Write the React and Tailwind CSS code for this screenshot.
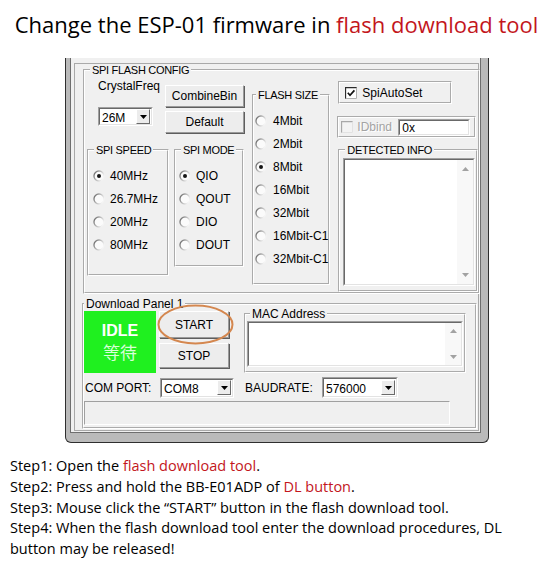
import React from "react";

const red = "text-[#c3161c]";

function RadioMark({ on }) {
  return (
    <svg width="12" height="12" viewBox="0 0 12 12" className="shrink-0">
      <defs>
        <linearGradient id="rg" x1="0" y1="0" x2="1" y2="0.5">
          <stop offset="0" stopColor="#5c5c5c" />
          <stop offset="0.5" stopColor="#b5b5b5" />
          <stop offset="1" stopColor="#f4f4f4" />
        </linearGradient>
      </defs>
      <circle cx="6" cy="6" r="5" fill="#fbfbfb" stroke="url(#rg)" strokeWidth="1.3" />
      {on && <circle cx="6" cy="6" r="2" fill="#151515" />}
    </svg>
  );
}

function Radio({ on, label, gap = "ml-[5px]" }) {
  return (
    <div className="flex h-[23px] items-center whitespace-nowrap">
      <RadioMark on={on} />
      <span className={gap}>{label}</span>
    </div>
  );
}

function CheckMark({ on, disabled }) {
  return (
    <svg width="12" height="12" viewBox="0 0 12 12" className="shrink-0">
      <rect x="0" y="0" width="12" height="12" fill={disabled ? "#f3f3f3" : "#fff"} />
      <path d="M0.5 12V0.5H12" stroke={disabled ? "#a8a8a8" : "#2a2a2a"} strokeWidth="1.3" fill="none" />
      <path d="M11.5 0.5V11.5H0.5" stroke={disabled ? "#e2e2e2" : "#b0b0b0"} strokeWidth="1" fill="none" />
      {on && <path d="M2.8 5.8 L5 8.3 L9.4 3.4" stroke="#111" strokeWidth="1.7" fill="none" />}
    </svg>
  );
}

function Group({ label, className = "", legend = "ml-[5px]", lead = "leading-[12px]", children }) {
  return (
    <fieldset className={`border-2 border-white [border-style:groove] ${className}`}>
      {label && (
        <legend className={`${legend} px-[2px] whitespace-nowrap text-[11px] ${lead} tracking-[-0.3px]`}>
          {label}
        </legend>
      )}
      {children}
    </fieldset>
  );
}

function Sunken({ className = "", children }) {
  return (
    <div className={`border border-[#a0a0a0] border-b-white border-r-white ${className}`}>
      <div className="h-full border border-[#696969] border-b-[#e3e3e3] border-r-[#e3e3e3] bg-white">
        {children}
      </div>
    </div>
  );
}

function Arrow({ up }) {
  return (
    <svg width="7" height="4" viewBox="0 0 7 4">
      <path d={up ? "M0 4 L3.5 0 L7 4Z" : "M0 0 L3.5 4 L7 0Z"} fill="#a2a2a2" />
    </svg>
  );
}

function TextBox({ className, pad = "py-[7px]" }) {
  return (
    <Sunken className={className}>
      <div className="flex h-full">
        <div className="flex-1" />
        <div className={`flex w-[16px] flex-col items-center justify-between bg-[#f8f8f8] ${pad}`}>
          <Arrow up />
          <Arrow />
        </div>
      </div>
    </Sunken>
  );
}

function Combo({ value, className = "" }) {
  return (
    <Sunken className={className}>
      <div className="flex h-full items-center pl-[2px]">
        <span className="flex-1 pt-[2px]">{value}</span>
        <div className="mr-[1px] flex h-[15px] w-[14px] items-center justify-center border border-white border-b-[#6a6a6a] border-r-[#6a6a6a] bg-[#ececec]">
          <svg width="7" height="4" viewBox="0 0 7 4">
            <path d="M0 0 L3.5 4 L7 0Z" fill="#000" />
          </svg>
        </div>
      </div>
    </Sunken>
  );
}

function Btn({ children, className = "" }) {
  return (
    <div
      className={`flex items-center justify-center border border-white border-b-[#9a9a9a] border-r-[#9a9a9a] bg-[#ededed] shadow-[1px_1px_0_#5e5e5e] ${className}`}
    >
      {children}
    </div>
  );
}

function Window() {
  return (
    <div className="ml-[65px] mt-[10px] h-[385px] w-[424px] rounded-b-[6px] border-x border-b border-[#2e2e2e] bg-[#bababa] pb-[9px] pl-[4px] pr-[7px]">
      <div className="h-full border-x border-b border-[#6e6e6e] bg-[#f0f0f0] pb-[1px] pl-[3px] pr-[1px] pt-[5px]">
        <div className="h-full border border-[#a9a9a9] font-['Liberation_Sans',Arial,sans-serif] text-[12px] leading-[14px] text-black">
          <Group label="SPI FLASH CONFIG" className="ml-[8px] h-[230px] w-[394px]">
            <div className="flex items-start">
              {/* left column */}
              <div className="ml-[2px] flex w-[157px] flex-col">
                <div className="flex items-start">
                  <div className="ml-[11px] flex w-[55px] flex-col whitespace-nowrap">
                    <span className="mt-[3px]">CrystalFreq</span>
                    <Combo value="26M" className="mt-[14px] h-[19px] w-[55px]" />
                  </div>
                  <div className="ml-[12px] mt-[9px] flex flex-col gap-[4px]">
                    <Btn className="h-[22px] w-[79px]">CombineBin</Btn>
                    <Btn className="h-[22px] w-[79px]">Default</Btn>
                  </div>
                </div>
                <div className="mt-[11px] flex items-start">
                  <Group label="SPI SPEED" className="h-[132px] w-[82px]">
                    <div className="pl-[4px] pt-[8px]">
                      <Radio on label="40MHz" />
                      <Radio label="26.7MHz" />
                      <Radio label="20MHz" />
                      <Radio label="80MHz" />
                    </div>
                  </Group>
                  <Group label="SPI MODE" className="ml-[5px] h-[123px] w-[70px]">
                    <div className="pl-[3px] pt-[8px]">
                      <Radio on label="QIO" />
                      <Radio label="QOUT" />
                      <Radio label="DIO" />
                      <Radio label="DOUT" />
                    </div>
                  </Group>
                </div>
              </div>
              {/* flash size */}
              <Group label="FLASH SIZE" legend="ml-[2px]" className="ml-[8px] mt-[13px] h-[196px] w-[75px]">
                <div className="pl-[1px] pt-[8px]">
                  <Radio label="4Mbit" gap="ml-[6px]" />
                  <Radio label="2Mbit" gap="ml-[6px]" />
                  <Radio on label="8Mbit" gap="ml-[6px]" />
                  <Radio label="16Mbit" gap="ml-[6px]" />
                  <Radio label="32Mbit" gap="ml-[6px]" />
                  <Radio label="16Mbit-C1" gap="ml-[6px]" />
                  <Radio label="32Mbit-C1" gap="ml-[6px]" />
                </div>
              </Group>
              {/* right column */}
              <div className="ml-[7px] flex flex-col">
                <div className="ml-[1px] mt-[5px] flex h-[23px] w-[114px] items-center border-2 border-white pl-[5px] [border-style:groove]">
                  <CheckMark on />
                  <span className="ml-[5px]">SpiAutoSet</span>
                </div>
                <div className="mt-[12px] flex h-[22px] w-[139px] items-start border-2 border-white pl-[2px] [border-style:groove]">
                  <div className="mt-[3px]">
                    <CheckMark disabled />
                  </div>
                  <span className="ml-[4px] mt-[2px] w-[41px] text-[#a3a3a3] [text-shadow:1px_1px_0_#fff]">IDbind</span>
                  <Sunken className="mt-[1px] h-[17px] w-[72px]">
                    <div className="pl-[2px] pt-[1px] leading-[13px]">0x</div>
                  </Sunken>
                </div>
                <Group label="DETECTED INFO" className="ml-[1px] mt-[6px] h-[148px] w-[140px]">
                  <TextBox className="ml-[3px] mt-[2px] h-[128px] w-[132px]" />
                </Group>
              </div>
            </div>
          </Group>

          <Group
            label="Download Panel 1"
            legend="ml-[0px] !text-[12px] !tracking-normal"
            lead="leading-[14px]"
            className="ml-[7px] mt-[3px] h-[132px] w-[395px]"
          >
            <div className="flex items-start">
              <div className="flex h-[62px] w-[72px] flex-col items-center justify-center bg-[#1ff01f] text-white">
                <span className="font-['Liberation_Sans',Arial,sans-serif] text-[16px] font-bold leading-[20px]">IDLE</span>
                <span className="font-['Noto_Sans_CJK_TC',sans-serif] text-[17px] leading-[22px] text-[#d8ffd8]">等待</span>
              </div>
              <div className="relative ml-[3px] flex flex-col">
                <Btn className="h-[27px] w-[70px]">START</Btn>
                <Btn className="mt-[5px] h-[25px] w-[70px]">STOP</Btn>
                <svg className="absolute left-[-2px] top-[-7px]" width="77" height="41" viewBox="0 0 77 41">
                  <ellipse cx="38.5" cy="20.5" rx="37" ry="19" fill="none" stroke="#d4874f" strokeWidth="2" />
                </svg>
              </div>
              <Group
                label="MAC Address"
                legend="ml-[4px] !text-[12px] !tracking-normal"
                lead="leading-[14px]"
                className="ml-[15px] mt-[-4px] h-[66px] w-[222px]"
              >
                <TextBox className="ml-[1px] h-[46px] w-[216px]" pad="py-[6px]" />
              </Group>
            </div>
            <div className="mt-[4px] flex h-[21px] items-center">
              <span className="ml-[1px] w-[75px]">COM PORT:</span>
              <Combo value="COM8" className="h-[20px] w-[74px]" />
              <span className="ml-[11px] w-[77px]">BAUDRATE:</span>
              <Combo value="576000" className="h-[21px] w-[76px]" />
            </div>
            <div className="mt-[3px] h-[24px] w-[366px] border border-[#a0a0a0] border-b-white border-r-white" />
          </Group>
        </div>
      </div>
    </div>
  );
}

export default function App() {
  return (
    <div className="h-[562px] w-[553px] overflow-hidden bg-white">
      <h1 className="flex h-[48px] items-center justify-center whitespace-nowrap font-['Open_Sans',sans-serif] text-[22px] font-normal text-black">
        Change the ESP-01 firmware in&nbsp;<span className={red}>flash download tool</span>
      </h1>
      <Window />
      <div className="mt-[13px] whitespace-nowrap pl-[10px] font-['Open_Sans',sans-serif] text-[14.5px] leading-[20.8px] text-black">
        <p>
          Step1: Open the <span className={red}>flash download tool</span>.
        </p>
        <p>
          Step2: Press and hold the BB-E01ADP of <span className={red}>DL button</span>.
        </p>
        <p>Step3: Mouse click the “START” button in the flash download tool.</p>
        <p>
          Step4: When the flash download tool enter the download procedures, DL
          <br />
          button may be released!
        </p>
      </div>
    </div>
  );
}
